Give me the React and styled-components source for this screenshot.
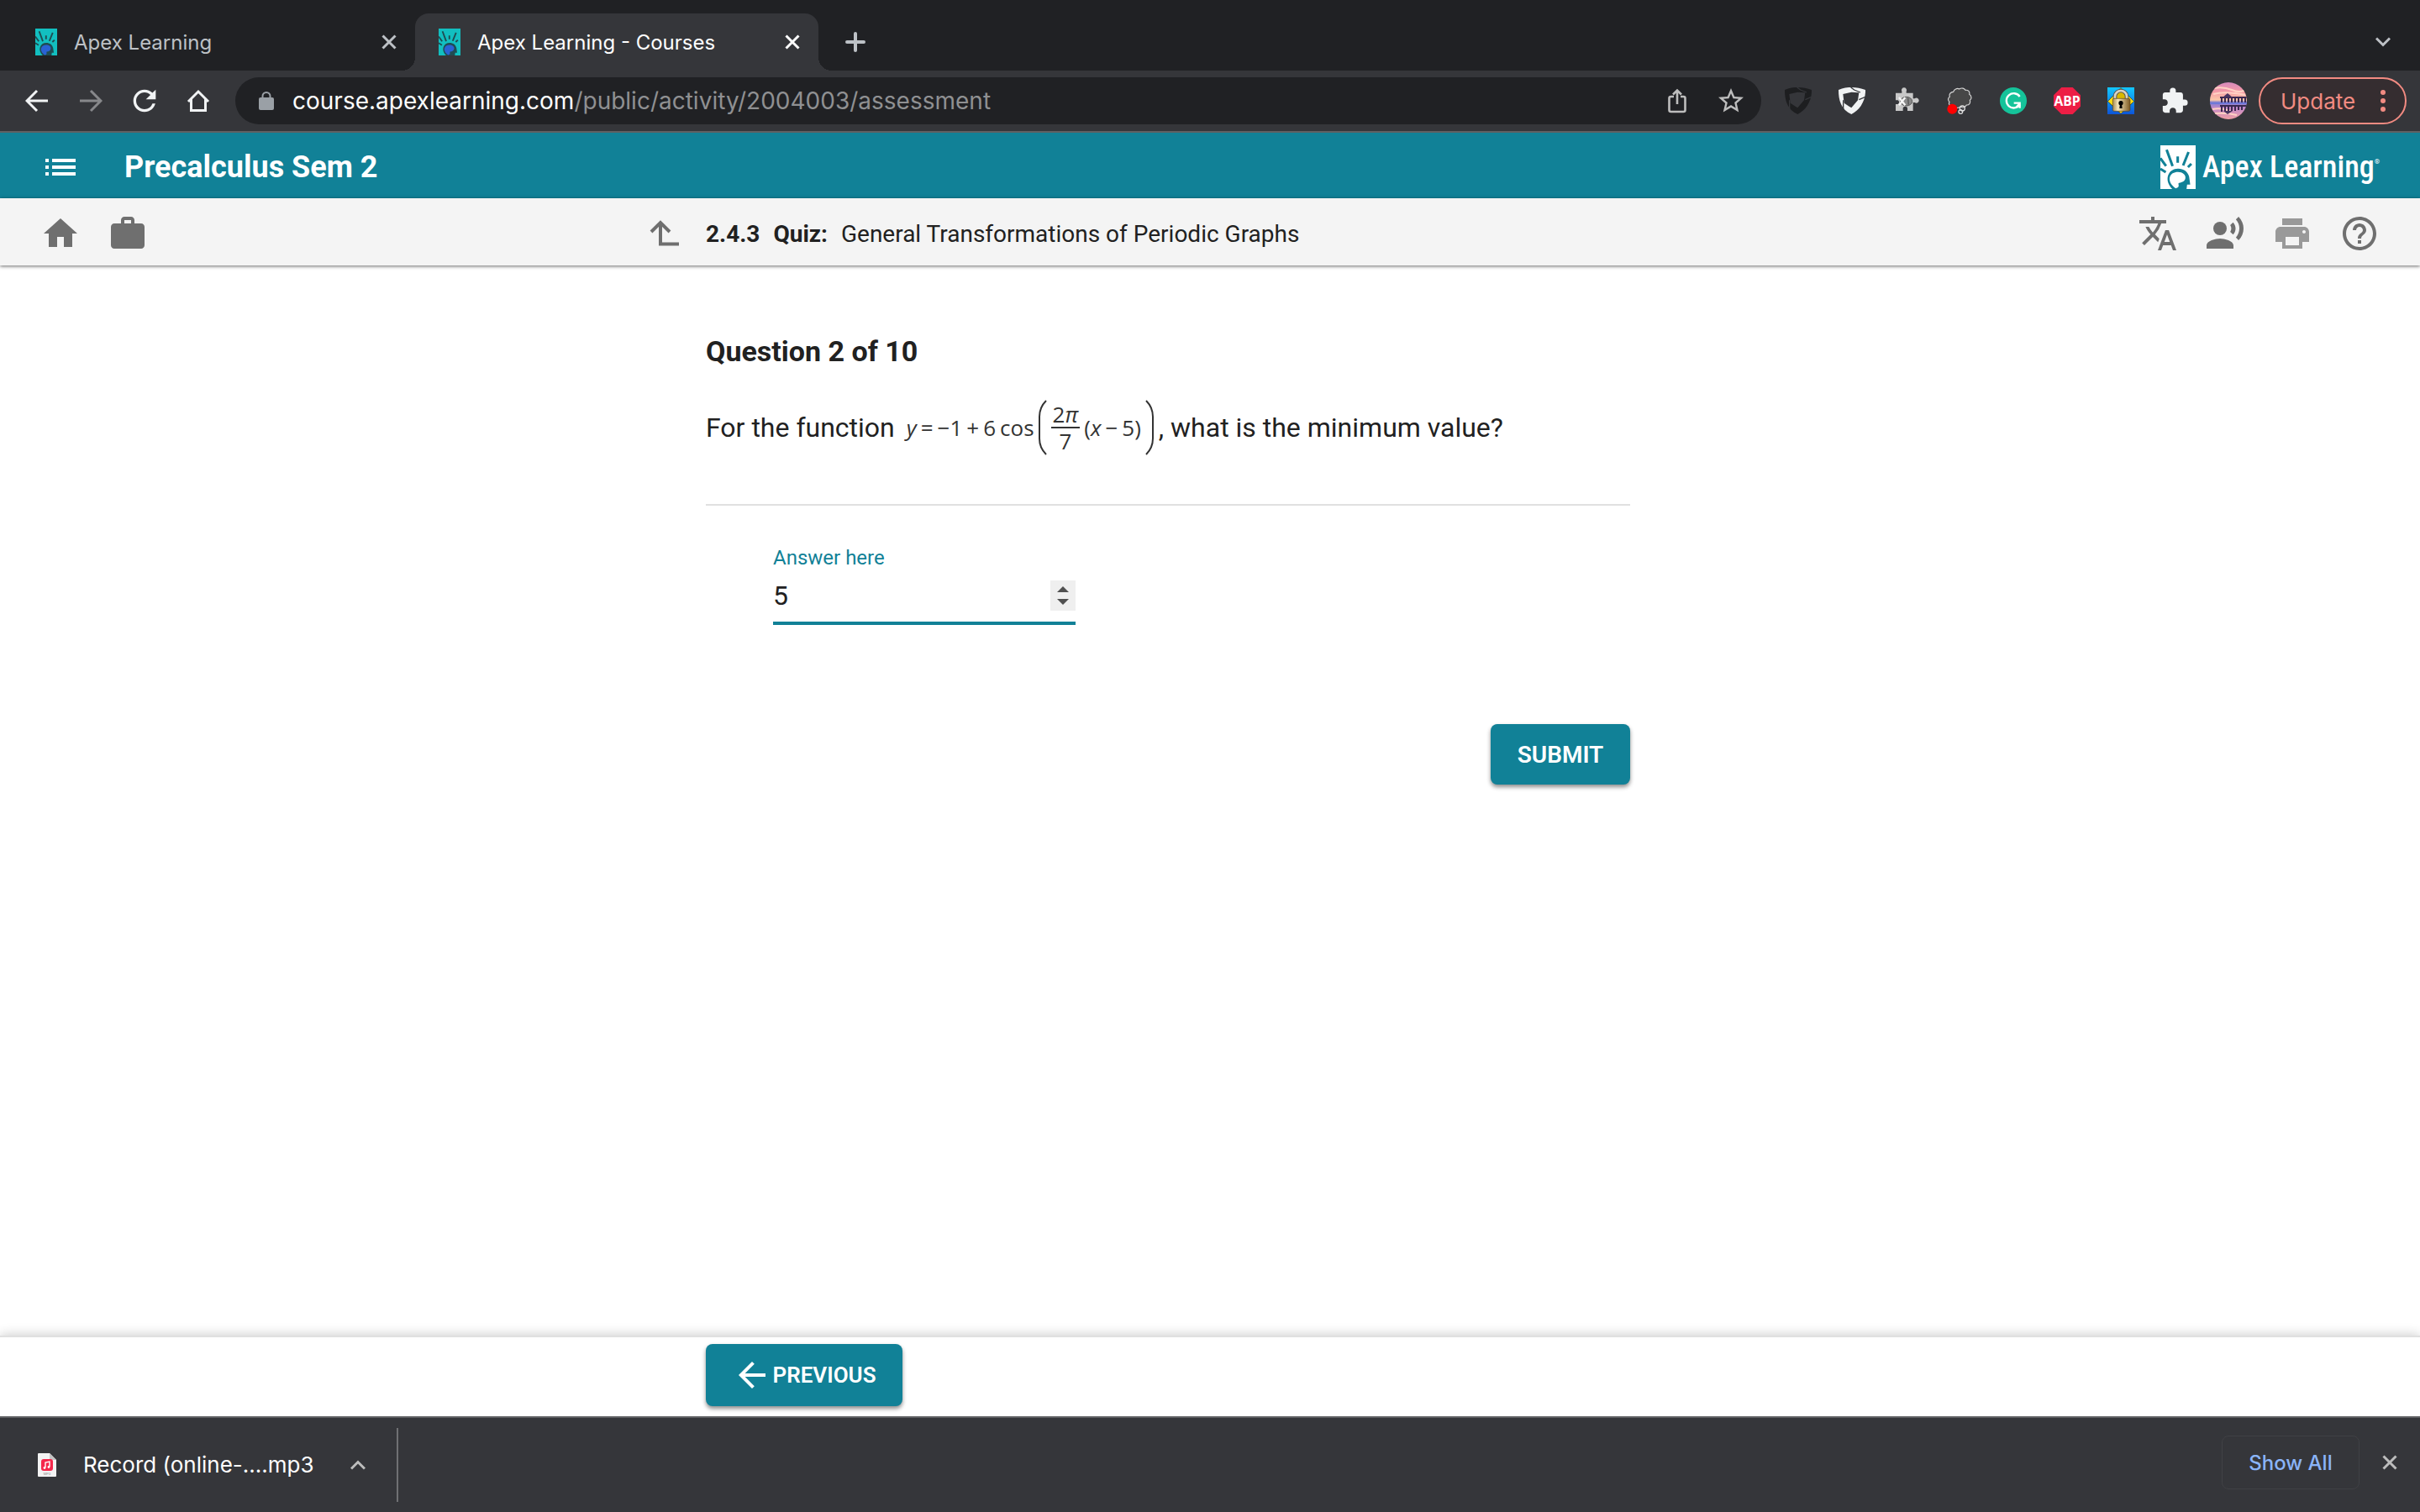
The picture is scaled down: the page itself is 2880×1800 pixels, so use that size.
import React, { useState } from 'react';
import styled, { createGlobalStyle } from 'styled-components';
import {
  MdExtension,
  MdHelpOutline,
  MdHome,
  MdList,
  MdPrint,
  MdRecordVoiceOver,
  MdRefresh,
  MdStarBorder,
  MdTranslate,
  MdWork,
  MdArrowBack,
} from 'react-icons/md';

const teal = '#118197';
const uiFont = "Inter, 'Liberation Sans', sans-serif";

const GlobalStyle = createGlobalStyle`
  * {
    box-sizing: border-box;
  }

  body {
    margin: 0;
    background: #fff;
    color: #212121;
    font-family: Roboto, 'Liberation Sans', sans-serif;
  }

  button {
    margin: 0;
    padding: 0;
    border: none;
    background: none;
    color: inherit;
    font: inherit;
    cursor: pointer;
  }

  svg {
    display: block;
    flex-shrink: 0;
  }
`;

const Page = styled.div`
  display: flex;
  flex-direction: column;
  min-height: 100vh;
`;

/* browser chrome */

const TabStrip = styled.div`
  display: flex;
  align-items: center;
  padding: 16px 26px 0 14px;
  background: #202124;
  color: #bdc1c6;
  font-family: ${uiFont};
`;

const Tab = styled.div`
  position: relative;
  display: flex;
  align-items: center;
  gap: 20px;
  width: 480px;
  height: 68px;
  padding: 0 22px 0 28px;
  border-radius: 16px 16px 0 0;
  background: ${(props) => (props.$active ? '#35363a' : 'transparent')};
  color: ${(props) => (props.$active ? '#fff' : '#bdc1c6')};
  font-size: 24px;

  &::before,
  &::after {
    content: '';
    display: ${(props) => (props.$active ? 'block' : 'none')};
    position: absolute;
    bottom: 0;
    width: 16px;
    height: 16px;
  }

  &::before {
    left: -16px;
    background: radial-gradient(circle at 0 0, #202124 16px, #35363a 16px);
  }

  &::after {
    right: -16px;
    background: radial-gradient(circle at 100% 0, #202124 16px, #35363a 16px);
  }
`;

const TabTitle = styled.span`
  flex: 1;
  white-space: nowrap;
`;

const NewTab = styled.button`
  margin: 0 auto 0 32px;
`;

const TabSearch = styled.button`
  display: flex;
  justify-content: center;
  width: 36px;
`;

const Toolbar = styled.div`
  display: flex;
  align-items: center;
  height: 74px;
  padding: 0 16px 0 12px;
  border-bottom: 2px solid #5f6063;
  background: #35363a;
  color: #f1f3f4;
  font-family: ${uiFont};
`;

const ToolButton = styled.button`
  display: flex;
  flex-shrink: 0;
  align-items: center;
  justify-content: center;
  width: 64px;
  height: 56px;
  color: ${(props) => props.$color || '#f1f3f4'};
`;

const AddressBar = styled.div`
  display: flex;
  flex: 1;
  align-items: center;
  height: 56px;
  margin: 0 12px;
  padding: 0 4px 0 28px;
  border-radius: 28px;
  background: #202124;
`;

const Url = styled.span`
  flex: 1;
  margin-left: 22px;
  color: #8f9092;
  font-size: 28px;
  white-space: nowrap;

  strong {
    color: #fff;
    font-weight: 400;
  }
`;

const UpdateButton = styled.button`
  display: flex;
  align-items: center;
  justify-content: space-between;
  width: 176px;
  height: 56px;
  margin-left: 4px;
  padding: 0 23px 0 24px;
  border: 2px solid #f28b82;
  border-radius: 28px;
  background: #352d30;
  color: #f28b82;
  font-size: 26px;
`;

/* course page */

const CourseHeader = styled.header`
  display: flex;
  align-items: center;
  height: 78px;
  padding: 4px 48px 0;
  background: ${teal};
  color: #fff;
`;

const CourseTitle = styled.h1`
  flex: 1;
  margin: 0 0 0 52px;
  font-size: 36px;
  font-weight: 700;
  line-height: 42px;
`;

const Brand = styled.a`
  display: flex;
  align-items: center;
  gap: 8px;
  color: #fff;
  font-family: 'Roboto Condensed', Lato, sans-serif;
  font-size: 36px;
  font-weight: 500;
  line-height: 52px;
  text-decoration: none;

  sup {
    align-self: flex-start;
    margin: 16px 0 0 -8px;
    font-size: 8px;
    line-height: 8px;
  }
`;

const ActivityBar = styled.nav`
  display: grid;
  grid-template-columns: 840px 1fr auto;
  align-items: center;
  height: 80px;
  padding: 4px 48px 0 0;
  background: #f4f4f4;
  box-shadow: 0 1px 4px rgba(0, 0, 0, 0.6);
  z-index: 1;
`;

const IconGroup = styled.div`
  display: flex;
  gap: 32px;
  padding-left: 48px;
`;

const IconButton = styled.button`
  width: 48px;
  height: 48px;
  color: ${(props) => (props.$muted ? '#999' : '#6f6f6f')};
  font-size: 48px;
`;

const UpButton = styled(IconButton)`
  display: flex;
  align-items: center;
  justify-content: center;
  margin: 0 25px 0 auto;
`;

const Crumb = styled.p`
  display: flex;
  gap: 16px;
  margin: 0;
  padding-top: 2px;
  font-size: 28px;
  line-height: 32px;
`;

const Main = styled.main`
  display: grid;
  flex: 1;
  grid-template-columns: 840px minmax(0, 1100px);
  align-content: start;
  padding-top: 84px;
`;

const Question = styled.form`
  grid-column: 2;
`;

const QuestionTitle = styled.h2`
  margin: 0;
  font-size: 34px;
  font-weight: 700;
  line-height: 36px;
`;

const Prompt = styled.div`
  display: flex;
  align-items: center;
  margin-top: 40px;
  padding-bottom: 58px;
  border-bottom: 2px solid #e0e0e0;
  font-size: 32px;
  line-height: 66px;
  white-space: nowrap;
`;

const Formula = styled.span`
  display: flex;
  align-items: center;
  gap: 5px;
  margin: 0 6px 0 14px;
  color: #333;
  font-family: 'Open Sans', 'DejaVu Sans', sans-serif;
  font-size: 26px;
  line-height: 30px;
`;

const Fraction = styled.span`
  display: flex;
  flex-direction: column;
  align-items: center;

  span:first-child {
    padding: 0 2px;
    border-bottom: 2px solid #333;
  }
`;

const Field = styled.div`
  display: flex;
  flex-direction: column;
  width: 360px;
  margin: 48px 0 0 80px;
`;

const FieldLabel = styled.label`
  color: ${teal};
  font-size: 24px;
  line-height: 28px;
`;

const InputRow = styled.div`
  display: flex;
  align-items: center;
  height: 66px;
  border-bottom: 4px solid ${teal};
`;

const NumberInput = styled.input`
  flex: 1;
  min-width: 0;
  padding: 0;
  border: none;
  outline: none;
  color: #212121;
  font-family: inherit;
  font-size: 32px;
  line-height: 36px;
  appearance: textfield;

  &::-webkit-inner-spin-button {
    display: none;
  }
`;

const Stepper = styled.span`
  display: flex;
  flex-direction: column;
  width: 30px;
  background: #efefef;
  color: #505050;
`;

const StepButton = styled.button`
  display: flex;
  align-items: ${(props) => (props.$down ? 'flex-start' : 'flex-end')};
  justify-content: center;
  height: 18px;
  padding: 4px 0;
`;

const RaisedButton = styled.button`
  display: flex;
  align-items: center;
  justify-content: center;
  width: ${(props) => props.$width};
  height: ${(props) => props.$height};
  border-radius: 8px;
  background: ${teal};
  box-shadow: 0 3px 5px rgba(0, 0, 0, 0.45);
  color: #fff;
  font-size: ${(props) => props.$size || '28px'};
  font-weight: 600;
`;

const Actions = styled.div`
  display: flex;
  justify-content: flex-end;
  margin-top: 118px;
`;

const PageFooter = styled.footer`
  height: 96px;
  padding: 8px 0 0 840px;
  border-top: 2px solid #e0e0e0;
  background: #fff;
  box-shadow: 0 -2px 12px rgba(0, 0, 0, 0.18);
`;

/* download shelf */

const Shelf = styled.div`
  display: flex;
  align-items: center;
  justify-content: space-between;
  height: 114px;
  padding: 0 14px 0 45px;
  border-top: 2px solid #5f6063;
  background: #35363a;
  color: #bdbdbd;
  font-family: ${uiFont};
  z-index: 1;
`;

const Download = styled.div`
  display: flex;
  align-items: center;
  height: 88px;
  padding-right: 37px;
  border-right: 2px solid #6f7073;
  font-size: 26px;

  span {
    margin: 0 44px 0 32px;
    color: #fff;
    line-height: 32px;
  }
`;

const ShelfActions = styled.div`
  display: flex;
  align-items: center;
  gap: 14px;
  padding-bottom: 6px;
`;

const ShowAll = styled.button`
  width: 164px;
  height: 64px;
  border: 1px solid #404145;
  border-radius: 8px;
  color: #8ab4f8;
  font-size: 24px;
  font-weight: 500;
`;

const CloseButton = styled.button`
  display: flex;
  align-items: center;
  justify-content: center;
  width: ${(props) => props.$width || '18px'};
  height: 36px;
`;

const Cross = () => (
  <svg width="18" height="18" viewBox="0 0 18 18" fill="none" stroke="currentColor" strokeWidth="3">
    <path d="M1.5 1.5 16.5 16.5M16.5 1.5 1.5 16.5" />
  </svg>
);

const Chevron = ({ up }) => (
  <svg width="18" height="12" viewBox="0 0 18 12" fill="none" stroke="currentColor" strokeWidth="3">
    <path d={up ? 'M1 10.5 9 2.5 17 10.5' : 'M1 1.5 9 9.5 17 1.5'} />
  </svg>
);

const ApexMark = ({ width, height, bg, line, head }) => (
  <svg width={width} height={height} viewBox="0 0 124 156" preserveAspectRatio="none">
    <rect width="124" height="156" fill={bg} />
    <g stroke={line} strokeWidth="9" fill="none">
      <path d="M22 16 43 74M99 24 80 72M61 40V62M109 66 97 78M0 46 20 74M0 84 19 96" />
    </g>
    <path
      d="M42 156C28 142 22 124 27 108 32 92 46 83 62 83 82 83 97 94 101 112L105 140H94L92 156Z"
      fill={line}
    />
    <path
      d="M54 154C40 144 30 130 33 115 36 101 48 95 62 95 78 95 90 105 88 117 87 127 77 133 66 134 61 135 66 142 64 147 62 151 58 152 54 154Z"
      fill={head}
    />
  </svg>
);

const BackIcon = ({ forward }) => (
  <svg width="28" height="28" viewBox="0 0 28 28" fill="none" stroke="currentColor" strokeWidth="3">
    <path d={forward ? 'M1 14H26M14 2 26 14 14 26' : 'M27 14H2M14 2 2 14 14 26'} />
  </svg>
);

const HomeOutline = () => (
  <svg width="28" height="28" viewBox="0 0 28 28" fill="none" stroke="currentColor" strokeWidth="3">
    <path d="M2 15 14 3 26 15M5.500 12V25.500H22.500V12" />
  </svg>
);

const LockIcon = () => (
  <svg width="18" height="22" viewBox="0 0 18 22" fill="#9aa0a6">
    <rect y="7" width="18" height="15" rx="2" />
    <path d="M4.500 8V5.500a4.500 4.500 0 0 1 9 0V8" fill="none" stroke="#9aa0a6" strokeWidth="2" />
  </svg>
);

const ShareIcon = () => (
  <svg width="22" height="30" viewBox="0 0 22 30" fill="none" stroke="currentColor" strokeWidth="2.600">
    <path d="M7 10H3.500a2 2 0 0 0-2 2V26a2 2 0 0 0 2 2H18.500a2 2 0 0 0 2-2V12a2 2 0 0 0-2-2H15" />
    <path d="M11 19V3M6 7.500 11 2.500 16 7.500" />
  </svg>
);

const ShieldIcon = () => (
  <svg width="32" height="32" viewBox="0 0 96 96">
    <path
      fill="currentColor"
      fillRule="evenodd"
      d="M0 9C16 1 32 0 48 0 64 0 80 3 96 9 97 32 90 50 80 66 70 80 60 89 46 96 28 88 16 76 9 60 2 44 0 28 0 9ZM16 24 20 56 38 68 46 73 69 46 73 19 46 17Z"
    />
    <path d="M44 0 56 9 78 18M17 46 17 80M96 34 73 44" stroke="#35363a" strokeWidth="4" fill="none" />
  </svg>
);

const PuzzleTool = () => (
  <svg width="32" height="32" viewBox="0 0 96 96">
    <path
      fill="#c8c8c8"
      d="M12 20H34V14a9 9 0 1 1 16 0V20H74V40H80a9 9 0 1 1 0 14H74V84H54V76a8 8 0 0 0-16 0V84H12V60H20a8 8 0 0 0 0-14H12Z"
    />
    <ellipse cx="50" cy="50" rx="21" ry="16" fill="#888" stroke="#555" strokeWidth="3" />
    <path d="M24 36 46 64M46 36 24 64" stroke="#f6f6f6" strokeWidth="7" />
    <path d="M56 38 58 62" stroke="#555" strokeWidth="4" />
  </svg>
);

const BubbleIcon = () => (
  <svg width="32" height="32" viewBox="0 0 96 96">
    <path
      d="M20 68C12 66 8 58 12 52 6 46 6 38 13 34 10 24 16 16 26 16 28 6 40 2 47 6 56 0 66 4 69 10 78 8 86 16 83 25 92 30 92 42 85 46 88 56 82 64 73 63 68 72 58 74 52 70 40 76 30 74 20 68Z"
      fill="#474747"
      stroke="#d6d6d6"
      strokeWidth="3.500"
    />
    <circle cx="22" cy="77" r="18" fill="#f00" />
    <g fill="none" stroke="#ddd" strokeWidth="4">
      <circle cx="58" cy="75" r="9" />
      <circle cx="52" cy="87" r="7" />
    </g>
  </svg>
);

const GrammarIcon = () => (
  <svg width="32" height="32" viewBox="0 0 96 96">
    <circle cx="48" cy="48" r="48" fill="#15c39a" />
    <path d="M71 33A26 26 0 1 0 71 62" fill="none" stroke="#fff" strokeWidth="7" />
    <path d="M50 56H71V74M72 56 60 70" fill="none" stroke="#fff" strokeWidth="7" />
  </svg>
);

const BlockIcon = () => (
  <svg width="32" height="32" viewBox="0 0 96 96">
    <path d="M28 0H68L96 28V68L68 96H28L0 68V28Z" fill="#ed1e45" />
    <text x="48" y="65" textAnchor="middle" fontFamily="'Open Sans', sans-serif" fontSize="47" fontWeight="700" fill="#fff">
      ABP
    </text>
  </svg>
);

const PadlockIcon = () => (
  <svg width="32" height="32" viewBox="0 0 96 96">
    <defs>
      <linearGradient id="sky" x2="0" y2="1">
        <stop offset="0" stopColor="#12c8ff" />
        <stop offset="1" stopColor="#0d55d8" />
      </linearGradient>
      <linearGradient id="brass">
        <stop offset="0" stopColor="#a88a50" />
        <stop offset="0.300" stopColor="#f6e6bc" />
        <stop offset="1" stopColor="#7d5a22" />
      </linearGradient>
    </defs>
    <rect width="96" height="96" fill="url(#sky)" />
    <path d="M48 2 95 50 48 94 1 50Z" fill="#ffdf10" stroke="#222" strokeWidth="2" />
    <path d="M27 46V32a21 20 0 0 1 42 0V46" fill="#d8b800" stroke="#555" strokeWidth="14" />
    <path d="M27 46V32a21 20 0 0 1 42 0V46" fill="none" stroke="#d8d4c4" strokeWidth="8" />
    <rect x="19" y="40" width="62" height="45" rx="5" fill="url(#brass)" stroke="#5a4420" strokeWidth="2" />
    <circle cx="48" cy="56" r="8" />
    <path d="M45 58H51L53 75H43Z" />
  </svg>
);

const Avatar = () => (
  <svg width="44" height="44" viewBox="0 0 44 44">
    <defs>
      <clipPath id="round">
        <circle cx="22" cy="22" r="22" />
      </clipPath>
      <linearGradient id="dusk" x2="0" y2="1">
        <stop offset="0" stopColor="#d58abc" />
        <stop offset="0.250" stopColor="#f59aa6" />
        <stop offset="0.480" stopColor="#fcc9a8" />
        <stop offset="0.540" stopColor="#7f7fd0" />
        <stop offset="0.700" stopColor="#c48ac8" />
        <stop offset="1" stopColor="#f0a0a4" />
      </linearGradient>
    </defs>
    <g clipPath="url(#round)">
      <rect width="44" height="44" fill="url(#dusk)" />
      <path d="M0 8Q14 4 26 9T44 7M4 14Q18 10 42 15M3 32Q14 30 24 34M6 37Q20 36 32 39" stroke="#ffd2c4" strokeWidth="2" fill="none" />
      <path d="M12 18H44M12 28H44" stroke="#3b2950" strokeWidth="2" />
      <path d="M14 18V24M18 18V24M22 18V24M26 18V24M30 18V24M34 18V24M38 18V24M42 18V24M14 28V35M18 28V34M22 28V36M26 28V34M30 28V34M34 28V33M38 28V33" stroke="#3b2950" strokeWidth="2" />
      <path d="M15 18 21 13 27 18ZM16 34H27L21 38Z" fill="#4a3560" />
      <path d="M0 25H44" stroke="#6f78d8" strokeWidth="2" />
    </g>
  </svg>
);

const Dots = () => (
  <svg width="6" height="26" viewBox="0 0 6 26" fill="currentColor">
    <circle cx="3" cy="3" r="3" />
    <circle cx="3" cy="13" r="3" />
    <circle cx="3" cy="23" r="3" />
  </svg>
);

const UpArrow = () => (
  <svg width="36" height="32" viewBox="0 0 36 32" fill="none" stroke="currentColor" strokeWidth="4">
    <path d="M2 14 13 3 24 14M13 3V28.500H35" />
  </svg>
);

const AudioFile = () => (
  <svg width="22" height="28" viewBox="0 0 22 28">
    <path d="M0 1a1 1 0 0 1 1-1H14L22 8V27a1 1 0 0 1-1 1H1a1 1 0 0 1-1-1Z" fill="#f3f3f3" />
    <path d="M14 0 22 8H14Z" fill="#c4c4c4" />
    <rect x="4" y="7" width="14" height="14" rx="3" fill="#f5284b" />
    <path d="M9 17V11L14 10V16" fill="none" stroke="#fff" strokeWidth="1.400" />
    <circle cx="8" cy="17.500" r="1.400" fill="#fff" />
    <circle cx="13" cy="16.500" r="1.400" fill="#fff" />
    <text x="11" y="26" textAnchor="middle" fontFamily="Inter, sans-serif" fontSize="4" fill="#888">
      MP3
    </text>
  </svg>
);

const Paren = ({ right }) => (
  <svg width="10" height="66" viewBox="0 0 10 66" fill="none" stroke="#333" strokeWidth="2">
    <path d={right ? 'M1 1Q9 9 9 20V46Q9 57 1 65' : 'M9 1Q1 9 1 20V46Q1 57 9 65'} />
  </svg>
);

const extensions = [
  { name: 'VPN off', color: '#1d1e20', icon: <ShieldIcon /> },
  { name: 'VPN', icon: <ShieldIcon /> },
  { name: 'Tools', icon: <PuzzleTool /> },
  { name: 'Comments', icon: <BubbleIcon /> },
  { name: 'Grammar', icon: <GrammarIcon /> },
  { name: 'Ad block', icon: <BlockIcon /> },
  { name: 'Lock', icon: <PadlockIcon /> },
  { name: 'Extensions', icon: <MdExtension size={34} /> },
  { name: 'Profile', icon: <Avatar /> },
];

const tabs = [
  { title: 'Apex Learning' },
  { title: 'Apex Learning - Courses', active: true },
];

const App = () => {
  const [answer, setAnswer] = useState(5);

  return (
    <Page>
      <GlobalStyle />
      <TabStrip>
        {tabs.map((tab) => (
          <Tab key={tab.title} $active={tab.active}>
            <ApexMark width="26" height="32" bg="#12bfc0" line="#1f4c52" head="#2a62d4" />
            <TabTitle>{tab.title}</TabTitle>
            <CloseButton aria-label="Close tab">
              <Cross />
            </CloseButton>
          </Tab>
        ))}
        <NewTab aria-label="New tab">
          <svg width="24" height="24" viewBox="0 0 24 24" stroke="currentColor" strokeWidth="4" strokeLinecap="round">
            <path d="M12 2V22M2 12H22" />
          </svg>
        </NewTab>
        <TabSearch aria-label="Search tabs">
          <Chevron />
        </TabSearch>
      </TabStrip>

      <Toolbar>
        <ToolButton aria-label="Back">
          <BackIcon />
        </ToolButton>
        <ToolButton aria-label="Forward" $color="#87888b">
          <BackIcon forward />
        </ToolButton>
        <ToolButton aria-label="Reload">
          <MdRefresh size={40} />
        </ToolButton>
        <ToolButton aria-label="Home">
          <HomeOutline />
        </ToolButton>
        <AddressBar>
          <LockIcon />
          <Url>
            <strong>course.apexlearning.com</strong>/public/activity/2004003/assessment
          </Url>
          <ToolButton aria-label="Share" $color="#bdbdbd">
            <ShareIcon />
          </ToolButton>
          <ToolButton aria-label="Bookmark" $color="#bdbdbd">
            <MdStarBorder size={36} />
          </ToolButton>
        </AddressBar>
        {extensions.map((ext) => (
          <ToolButton key={ext.name} aria-label={ext.name} $color={ext.color}>
            {ext.icon}
          </ToolButton>
        ))}
        <UpdateButton>
          Update
          <Dots />
        </UpdateButton>
      </Toolbar>

      <CourseHeader>
        <button aria-label="Course menu">
          <MdList size={48} />
        </button>
        <CourseTitle>Precalculus Sem 2</CourseTitle>
        <Brand href="#">
          <ApexMark width="42" height="52" bg="#fff" line={teal} head="#fff" />
          Apex Learning
          <sup>®</sup>
        </Brand>
      </CourseHeader>

      <ActivityBar>
        <IconGroup>
          <IconButton aria-label="Home">
            <MdHome />
          </IconButton>
          <IconButton aria-label="Portfolio">
            <MdWork />
          </IconButton>
          <UpButton aria-label="Up one level">
            <UpArrow />
          </UpButton>
        </IconGroup>
        <Crumb>
          <b>2.4.3</b>
          <b>Quiz:</b>
          <span>General Transformations of Periodic Graphs</span>
        </Crumb>
        <IconGroup>
          <IconButton aria-label="Translate">
            <MdTranslate />
          </IconButton>
          <IconButton aria-label="Read aloud">
            <MdRecordVoiceOver />
          </IconButton>
          <IconButton aria-label="Print" $muted>
            <MdPrint />
          </IconButton>
          <IconButton aria-label="Help">
            <MdHelpOutline />
          </IconButton>
        </IconGroup>
      </ActivityBar>

      <Main>
        <Question onSubmit={(e) => e.preventDefault()}>
          <QuestionTitle>Question 2 of 10</QuestionTitle>
          <Prompt>
            <span>For the function</span>
            <Formula>
              <i>y</i>
              <span>=</span>
              <span>−1</span>
              <span>+</span>
              <span>6</span>
              <span>cos</span>
              <Paren />
              <Fraction>
                <span>
                  2<i>π</i>
                </span>
                <span>7</span>
              </Fraction>
              <span>
                (<i>x</i>
              </span>
              <span>−</span>
              <span>5)</span>
              <Paren right />
            </Formula>
            <span>, what is the minimum value?</span>
          </Prompt>
          <Field>
            <FieldLabel htmlFor="answer">Answer here</FieldLabel>
            <InputRow>
              <NumberInput
                id="answer"
                type="number"
                value={answer}
                onChange={(e) => setAnswer(e.target.value)}
              />
              <Stepper>
                <StepButton type="button" aria-label="Increase" onClick={() => setAnswer(Number(answer) + 1)}>
                  <svg width="14" height="7" viewBox="0 0 14 7" fill="currentColor">
                    <path d="M0 7 7 0 14 7Z" />
                  </svg>
                </StepButton>
                <StepButton type="button" aria-label="Decrease" $down onClick={() => setAnswer(Number(answer) - 1)}>
                  <svg width="14" height="7" viewBox="0 0 14 7" fill="currentColor">
                    <path d="M0 0 7 7 14 0Z" />
                  </svg>
                </StepButton>
              </Stepper>
            </InputRow>
          </Field>
          <Actions>
            <RaisedButton type="submit" $width="166px" $height="72px">
              SUBMIT
            </RaisedButton>
          </Actions>
        </Question>
      </Main>

      <PageFooter>
        <RaisedButton $width="234px" $height="74px" $size="26px">
          <MdArrowBack size={48} />
          PREVIOUS
        </RaisedButton>
      </PageFooter>

      <Shelf>
        <Download>
          <AudioFile />
          <span>Record (online-....mp3</span>
          <Chevron up />
        </Download>
        <ShelfActions>
          <ShowAll>Show All</ShowAll>
          <CloseButton aria-label="Close downloads" $width="44px">
            <Cross />
          </CloseButton>
        </ShelfActions>
      </Shelf>
    </Page>
  );
};

export default App;
